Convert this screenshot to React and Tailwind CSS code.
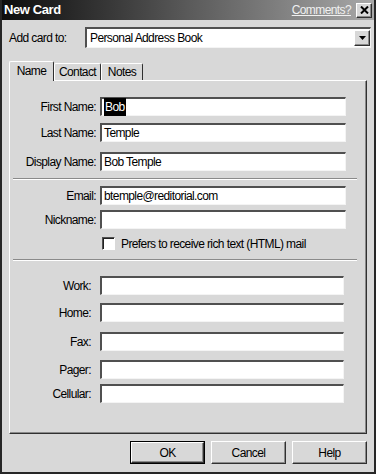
import React from 'react';

const sunken =
  "border-t-2 border-l-2 border-b border-r border-t-[#505050] border-l-[#505050] border-b-[#f4f4f4] border-r-[#f4f4f4] bg-white";

const raised =
  "bg-[#d8d8d8] border-t border-l border-t-white border-l-white border-b border-r border-b-[#303030] border-r-[#303030] shadow-[inset_-1px_-1px_0_#8a8a8a]";

const Field = ({ label, labelW, gap, inputW, mt, children }) => (
  <div className={`flex items-center h-[19px] ${mt}`}>
    <span className={`${labelW} ${gap} text-right whitespace-nowrap`}>{label}</span>
    <div className={`${inputW} h-[19px] ${sunken} flex items-center pl-[2px]`}>{children}</div>
  </div>
);

const Separator = ({ mt }) => (
  <div className={`${mt} ml-[3px] w-[344px] h-[2px] border-t border-t-[#8a8a8a] border-b border-b-white`} />
);

const NameRow = ({ label, mt, children }) => (
  <Field label={label} labelW="w-[86px]" gap="mr-[4px]" inputW="w-[246px]" mt={mt}>
    {children}
  </Field>
);

const PhoneRow = ({ label, mt }) => (
  <Field label={label} labelW="w-[81px]" gap="mr-[9px]" inputW="w-[244px]" mt={mt} />
);

export default function App() {
  return (
    <div className="w-[376px] h-[474px] flex flex-col bg-[#d8d8d8] border-x-2 border-b-2 border-[#262626] font-['Liberation_Sans',Arial,sans-serif] text-[12px] text-black tracking-[-0.6px]">
      {/* Title bar */}
      <div className="h-[20px] flex items-center bg-gradient-to-r from-[#0e0e0e] via-[#5a5a5a] to-[#a9a9a9] pl-[2px] pr-[2px]">
        <span className="text-white font-bold text-[13px] tracking-[-0.4px]">New Card</span>
        <span className="ml-auto text-[#f0f0f0] underline mr-[5px]">Comments?</span>
        <div className={`w-[16px] h-[15px] flex items-center justify-center ${raised}`}>
          <svg width="9" height="8" viewBox="0 0 9 8">
            <path d="M1 0.5 L8 7.5 M8 0.5 L1 7.5" stroke="black" strokeWidth="2" />
          </svg>
        </div>
      </div>

      {/* Add card to */}
      <div className="mt-[7px] flex items-center h-[21px] pl-[7px]">
        <span className="w-[76px]">Add card to:</span>
        <div className={`w-[286px] h-[21px] ${sunken} flex items-center`}>
          <span className="pl-[3px]">Personal Address Book</span>
          <div className={`ml-auto w-[16px] h-[16px] flex items-center justify-center ${raised}`}>
            <svg width="7" height="4" viewBox="0 0 7 4">
              <path d="M0 0 H7 L3.5 4 Z" fill="black" />
            </svg>
          </div>
        </div>
      </div>

      {/* Tabs */}
      <div className="mt-[12px] pl-[7px] flex items-end h-[20px]">
        <div className="w-[45px] h-[20px] relative z-10 -mb-px bg-[#d8d8d8] border-t border-l border-t-white border-l-white border-r border-r-[#303030] rounded-t-[2px] flex items-center justify-center pb-[2px]">
          Name
        </div>
        <div className="w-[47px] h-[17px] border-t border-l border-t-white border-l-white border-r border-r-[#303030] rounded-t-[2px] flex items-center justify-center">
          Contact
        </div>
        <div className="w-[42px] h-[17px] border-t border-l border-t-white border-l-white border-r border-r-[#303030] rounded-t-[2px] flex items-center justify-center">
          Notes
        </div>
      </div>

      {/* Panel */}
      <div className="ml-[7px] w-[358px] h-[354px] border-t border-l border-t-white border-l-white border-r border-b border-r-[#303030] border-b-[#303030] shadow-[inset_-1px_-1px_0_#8a8a8a] flex flex-col">
        <NameRow label="First Name:" mt="mt-[16px]">
          <span className="bg-black text-white px-px">Bob</span>
        </NameRow>
        <NameRow label="Last Name:" mt="mt-[7px]">Temple</NameRow>
        <NameRow label="Display Name:" mt="mt-[10px]">Bob Temple</NameRow>
        <Separator mt="mt-[7px]" />
        <NameRow label="Email:" mt="mt-[6px]">btemple@reditorial.com</NameRow>
        <NameRow label="Nickname:" mt="mt-[5px]" />
        <div className="mt-[8px] flex items-center h-[13px] pl-[92px]">
          <div className="w-[13px] h-[13px] border-t border-l border-t-[#505050] border-l-[#505050] border-b border-r border-b-white border-r-white bg-white shadow-[inset_1px_1px_0_#202020]" />
          <span className="ml-[6px]">Prefers to receive rich text (HTML) mail</span>
        </div>
        <Separator mt="mt-[9px]" />
        <PhoneRow label="Work:" mt="mt-[15px]" />
        <PhoneRow label="Home:" mt="mt-[8px]" />
        <PhoneRow label="Fax:" mt="mt-[10px]" />
        <PhoneRow label="Pager:" mt="mt-[9px]" />
        <PhoneRow label="Cellular:" mt="mt-[5px]" />
      </div>

      {/* Buttons */}
      <div className="mt-[7px] pr-[7px] flex justify-end gap-[6px]">
        <div className="w-[75px] h-[23px] border border-black">
          <div className={`w-full h-full flex items-center justify-center ${raised}`}>OK</div>
        </div>
        <div className={`w-[75px] h-[23px] flex items-center justify-center ${raised}`}>Cancel</div>
        <div className={`w-[75px] h-[23px] flex items-center justify-center ${raised}`}>Help</div>
      </div>
    </div>
  );
}
